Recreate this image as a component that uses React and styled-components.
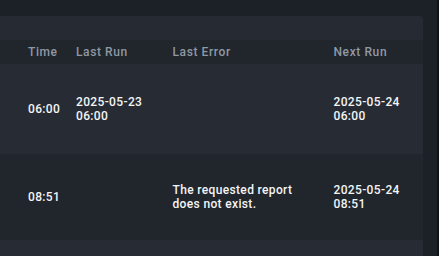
import React from 'react';
import styled, { createGlobalStyle } from 'styled-components';

const GlobalStyle = createGlobalStyle`
  html, body {
    margin: 0;
    padding: 0;
    background: #1c2027;
    font-family: Roboto, "Noto Sans", sans-serif;
  }
`;

const Page = styled.div`
  display: flex;
  height: 256px;
  overflow: hidden;
`;

const Main = styled.div`
  flex: 1;
  padding: 16px 14px 0 0;
`;

const ScrollStrip = styled.div`
  width: 2px;
  background: #0f1317;
`;

const Panel = styled.div`
  background: #262b33;
  border-radius: 0 4px 0 0;
  overflow: hidden;
`;

const Toolbar = styled.div`
  height: 24px;
`;

const Row = styled.div`
  display: grid;
  grid-template-columns: 48px 96.5px 161px 1fr;
  align-items: center;
  padding-left: 28px;
  height: ${({ $h }) => $h}px;
  background: ${({ $dark }) => ($dark ? '#21252c' : '#272c34')};
`;

const HeadCell = styled.div`
  font-size: 12px;
  font-weight: 500;
  letter-spacing: 0.6px;
  color: #8f99a4;
`;

const Cell = styled.div`
  font-size: 12px;
  font-weight: 500;
  letter-spacing: 0.35px;
  line-height: 14px;
  color: #f3f5f7;
  padding-right: 8px;
`;

const jobs = [
  { time: '06:00', lastRun: ['2025-05-23', '06:00'], error: null, next: ['2025-05-24', '06:00'] },
  { time: '08:51', lastRun: null, error: ['The requested report', 'does not exist.'], next: ['2025-05-24', '08:51'] },
];

const Lines = ({ lines }) =>
  lines ? lines.map((l, i) => <div key={i}>{l}</div>) : null;

export default function App() {
  return (
    <Page>
      <GlobalStyle />
      <Main>
        <Panel>
          <Toolbar />
          <Row $dark $h={24}>
            <HeadCell>Time</HeadCell>
            <HeadCell>Last Run</HeadCell>
            <HeadCell>Last Error</HeadCell>
            <HeadCell>Next Run</HeadCell>
          </Row>
          {jobs.map((j, i) => (
            <Row key={i} $dark={i % 2 === 1} $h={i === 0 ? 90 : 86}>
              <Cell>{j.time}</Cell>
              <Cell><Lines lines={j.lastRun} /></Cell>
              <Cell><Lines lines={j.error} /></Cell>
              <Cell><Lines lines={j.next} /></Cell>
            </Row>
          ))}
          <Row $h={40} />
        </Panel>
      </Main>
      <ScrollStrip />
    </Page>
  );
}
